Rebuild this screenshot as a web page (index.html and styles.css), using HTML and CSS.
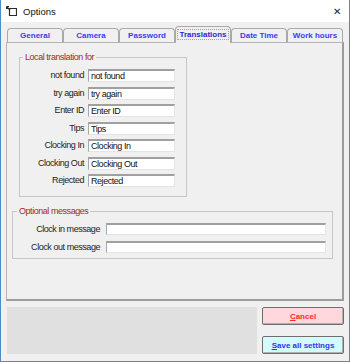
FILE: index.html
```html
<!DOCTYPE html>
<html lang="en">
<head>
    <meta charset="UTF-8">
    <title>Options</title>
    <link rel="stylesheet" href="styles.css">
</head>
<body>
    <div class="window">
        <div class="titlebar">
            <svg class="app-icon" width="11" height="11" viewBox="0 0 11 11">
                <path d="M3.5 2.5 H10.5 V9.5 H3.5 Z" fill="none" stroke="#2b2b2b" stroke-width="1.2"/>
                <path d="M0.5 0.5 L4 4 M0.5 0.5 H3 M0.5 0.5 V3" fill="none" stroke="#2b2b2b" stroke-width="1.2"/>
            </svg>
            <span class="title">Options</span>
            <span class="close">&#x2715;</span>
        </div>

        <div class="client">
            <div class="tabs">
                <div class="tab">General</div>
                <div class="tab">Camera</div>
                <div class="tab">Password</div>
                <div class="tab active"><span class="focus">Translations</span></div>
                <div class="tab">Date Time</div>
                <div class="tab">Work hours</div>
            </div>

            <div class="panel">
                <fieldset class="group group-local">
                    <legend>Local translation for</legend>
                    <div class="rows">
                        <label>not found</label><input type="text" value="not found">
                        <label>try again</label><input type="text" value="try again">
                        <label>Enter ID</label><input type="text" value="Enter ID">
                        <label>Tips</label><input type="text" value="Tips">
                        <label>Clocking In</label><input type="text" value="Clocking In">
                        <label>Clocking Out</label><input type="text" value="Clocking Out">
                        <label>Rejected</label><input type="text" value="Rejected">
                    </div>
                </fieldset>

                <fieldset class="group group-optional">
                    <legend>Optional messages</legend>
                    <div class="rows">
                        <label>Clock in message</label><input type="text" value="">
                        <label>Clock out message</label><input type="text" value="">
                    </div>
                </fieldset>
            </div>

            <div class="bottom">
                <div class="status"></div>
                <div class="buttons">
                    <button class="btn btn-cancel"><u>C</u>ancel</button>
                    <button class="btn btn-save"><u>S</u>ave all settings</button>
                </div>
            </div>
        </div>
    </div>
</body>
</html>
```

FILE: styles.css
```css
body {
    margin: 0;
    font-family: "Liberation Sans", Arial, sans-serif;
    font-size: 8px;
    color: #1a1a1a;
    background-color: #ffffff;
}

.window {
    width: 350px;
    height: 362px;
    box-sizing: border-box;
    border: 1px solid #4a8dcf;
    border-top: none;
    display: flex;
    flex-direction: column;
}

.titlebar {
    height: 22px;
    flex: none;
    background-color: #ffffff;
    display: flex;
    align-items: center;
    padding-left: 5px;
    padding-top: 1px;
    box-sizing: border-box;
}

.app-icon {
    margin-right: 6px;
}

.title {
    font-size: 9.5px;
    color: #111;
}

.close {
    margin-left: auto;
    margin-right: 8px;
    font-size: 10px;
    color: #222;
}

.client {
    flex: 1;
    background-color: #f0f0f0;
    padding: 6px 5px 0 5px;
}

.tabs {
    display: flex;
    align-items: flex-end;
    height: 14px;
    padding-left: 1px;
}

.tab {
    width: 56px;
    height: 14px;
    box-sizing: border-box;
    border: 1px solid #a9a9a9;
    border-bottom: none;
    border-radius: 4px 4px 0 0;
    background-color: #f0f0f0;
    color: #3b3bf5;
    font-weight: bold;
    display: flex;
    align-items: center;
    justify-content: center;
}

.tab.active {
    height: 17px;
    margin-bottom: -1px;
    position: relative;
    z-index: 2;
    color: #2a2ad0;
    padding-bottom: 2px;
}

.focus {
    outline: 1px dotted #b4a84a;
    outline-offset: 0;
    padding: 0 1px;
}

.panel {
    height: 259px;
    box-sizing: border-box;
    border-top: 1px solid #b4b4b4;
    border-left: 1px solid #b4b4b4;
    border-right: 2px solid #9c9c9c;
    border-bottom: 2px solid #9c9c9c;
    overflow: hidden;
}

.group {
    box-sizing: border-box;
    border: 1px solid #c6c6c6;
    min-width: 0;
}

.group legend {
    color: #a3262e;
    font-size: 9px;
    letter-spacing: -0.45px;
    line-height: 10px;
    padding: 0 2px;
}

.rows {
    display: grid;
    align-items: center;
}

.rows label {
    text-align: right;
    white-space: nowrap;
    font-size: 9px;
    letter-spacing: -0.45px;
    color: #222;
}

.rows input {
    box-sizing: border-box;
    margin: 0;
    padding: 0 2px;
    font-family: inherit;
    font-size: 9px;
    letter-spacing: -0.45px;
    color: #111;
    background-color: #ffffff;
    border-top: 2px solid #a0a0a0;
    border-left: 1px solid #a8a8a8;
    border-right: 1px solid #e4e4e4;
    border-bottom: 1px solid #e4e4e4;
    outline: none;
}

.group-local {
    width: 168px;
    margin: 9px 0 0 12px;
    padding: 7px 11px 9px 0;
}

.group-local legend {
    margin-left: 3px;
}

.group-local .rows {
    grid-template-columns: 64px 87px;
    column-gap: 4px;
    row-gap: 4.5px;
}

.group-local .rows label,
.group-local .rows input {
    height: 13px;
    line-height: 12px;
}

.group-optional {
    width: 321px;
    margin: 9px 0 0 5px;
    padding: 7px 6px 5px 0;
}

.group-optional legend {
    margin-left: 4px;
}

.group-optional .rows {
    grid-template-columns: 87px 220px;
    column-gap: 6px;
    row-gap: 6px;
}

.group-optional .rows label,
.group-optional .rows input {
    height: 12px;
    line-height: 12px;
}

.bottom {
    display: flex;
    gap: 5px;
    margin-top: 6px;
}

.status {
    width: 250px;
    height: 47px;
    margin-left: 1px;
    background-color: #e0e0e0;
}

.buttons {
    width: 82px;
    height: 47px;
    display: flex;
    flex-direction: column;
    justify-content: space-between;
}

.btn {
    height: 18px;
    margin: 0;
    padding: 0;
    font-family: inherit;
    font-size: 8px;
    font-weight: bold;
    border: 1px solid #6f6f6f;
    border-radius: 2px;
    box-shadow: inset -1px -1px 0 #b0b0b0;
}

.btn-cancel {
    background-color: #ffd7dc;
    color: #ff2a2a;
}

.btn-save {
    background-color: #d2fcfc;
    color: #3232f0;
}
```
